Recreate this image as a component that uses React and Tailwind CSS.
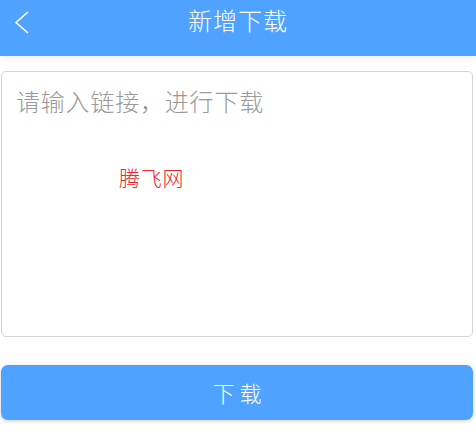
import React from 'react';

const App = () => {
    return (
        <div className="w-[476px] h-[435px] bg-white font-['Noto_Sans_CJK_SC',sans-serif]">
            <div className="h-[56px] bg-[#4fa3ff] flex items-start relative shadow-[0_2px_6px_rgba(0,0,0,0.08)]">
                <svg className="absolute left-[13px] top-[11px]" width="18" height="23" viewBox="0 0 18 23">
                    <path d="M15 1 L3 11.5 L15 22" fill="none" stroke="#fff" strokeWidth="1.6" />
                </svg>
                <div className="flex-1 text-center text-white text-[24px] tracking-[1px] leading-[24px] pt-[8px] font-light">新增下载</div>
            </div>
            <div className="pt-[15px] pl-[1px] pr-[3px]">
                <div className="h-[266px] border border-[#d4d4d4] rounded-[5px] pl-[14px] pr-[15px] pt-[13px]">
                    <div className="text-[24px] tracking-[0.8px] leading-[32px] text-[#999] font-light">请输入链接，进行下载</div>
                    <div className="pl-[103px] pt-[46px] text-[21px] tracking-[0.7px] leading-[28px] text-[#f5222d] font-light">腾飞网</div>
                </div>
                <button className="mt-[28px] w-full h-[55px] rounded-[7px] bg-[#4fa3ff] text-white text-[22px] font-light shadow-[0_1px_4px_rgba(0,0,0,0.2)] flex items-center justify-center">
                    下 载
                </button>
            </div>
        </div>
    );
};

export default App;
